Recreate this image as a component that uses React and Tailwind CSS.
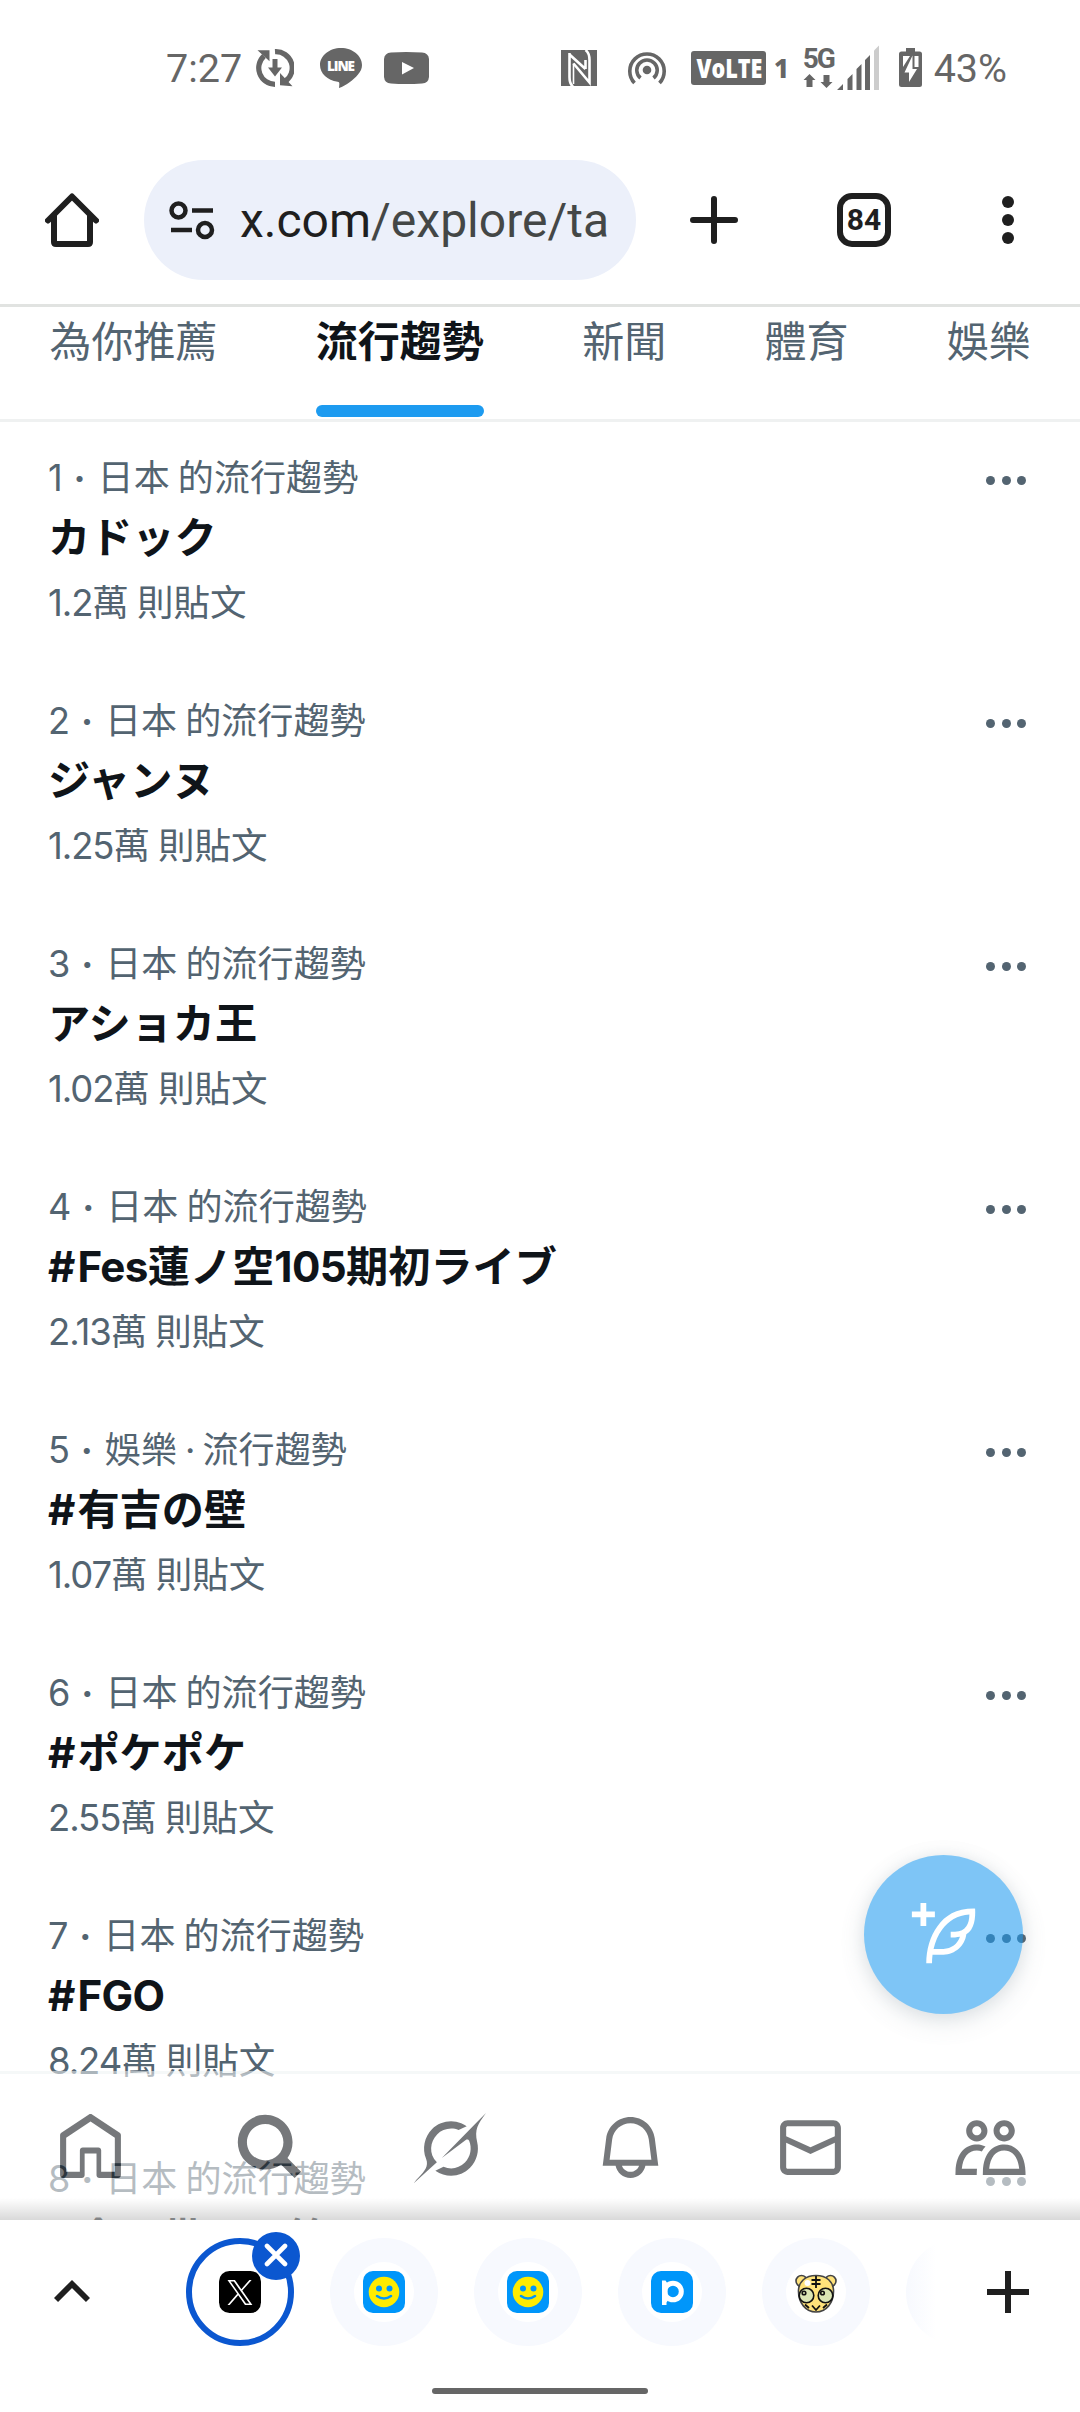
"use client";

const tabs = ["為你推薦", "流行趨勢", "新聞", "體育", "娛樂"];

const trends = [
  { rank: "1", meta: "日本 的流行趨勢", title: "カドック", count: "1.2" },
  { rank: "2", meta: "日本 的流行趨勢", title: "ジャンヌ", count: "1.25" },
  { rank: "3", meta: "日本 的流行趨勢", title: "アショカ王", count: "1.02" },
  { rank: "4", meta: "日本 的流行趨勢", title: "#Fes蓮ノ空105期初ライブ", count: "2.13" },
  { rank: "5", meta: "娛樂 · 流行趨勢", title: "#有吉の壁", count: "1.07" },
  { rank: "6", meta: "日本 的流行趨勢", title: "#ポケポケ", count: "2.55" },
  { rank: "7", meta: "日本 的流行趨勢", title: "#FGO", count: "8.24" },
  { rank: "8", meta: "日本 的流行趨勢", title: "#今の帯との第", count: "1.1" },
];

const navIcons = [
  {
    name: "home",
    d: "M21.591 7.146L12.52 1.157c-.316-.21-.724-.21-1.04 0l-9.071 5.99c-.26.173-.409.456-.409.757v13.183c0 .502.418.913.929.913H9.14c.51 0 .929-.41.929-.913v-7.075h3.909v7.075c0 .502.417.913.928.913h6.165c.511 0 .929-.41.929-.913V7.904c0-.301-.158-.584-.408-.758zM20 20l-4.5.01.011-7.097c0-.502-.418-.913-.928-.913H9.44c-.511 0-.929.41-.929.913L8.5 20H4V8.773l8.011-5.342L20 8.764z",
  },
  {
    name: "search",
    d: "M10.25 4.25c-3.314 0-6 2.686-6 6s2.686 6 6 6c1.657 0 3.155-.67 4.243-1.757 1.087-1.088 1.757-2.586 1.757-4.243 0-3.314-2.686-6-6-6zm-9 6c0-4.971 4.029-9 9-9s9 4.029 9 9c0 1.943-.617 3.744-1.664 5.215l4.475 4.474-2.122 2.122-4.474-4.475c-1.471 1.047-3.272 1.664-5.215 1.664-4.971 0-9-4.029-9-9z",
  },
  {
    name: "grok",
    viewBox: "0 0 33 32",
    d: "M12.745 20.54l10.97-8.19c.539-.4 1.307-.244 1.564.38 1.349 3.288.746 7.241-1.938 9.955-2.683 2.714-6.417 3.31-9.83 1.954l-3.728 1.745c5.347 3.697 11.84 2.782 15.898-1.324 3.219-3.255 4.216-7.692 3.284-11.693l.008.009c-1.351-5.878.332-8.227 3.782-13.031L33 0l-4.54 4.59v-.014L12.743 20.544m-2.263 1.987c-3.837-3.707-3.175-9.446.1-12.755 2.42-2.449 6.388-3.448 9.852-1.979l3.72-1.737c-.67-.49-1.53-1.017-2.515-1.387-4.455-1.854-9.789-.931-13.41 2.728-3.483 3.523-4.579 8.94-2.697 13.561 1.405 3.454-.899 5.898-3.22 8.364C1.49 30.2.666 31.074 0 32l10.478-9.466",
  },
  {
    name: "notifications",
    d: "M19.993 9.042C19.48 5.017 16.054 2 11.996 2s-7.49 3.021-7.999 7.051L2.866 18H7.1c.463 2.282 2.481 4 4.9 4s4.437-1.718 4.9-4h4.236l-1.143-8.958zM12 20c-1.306 0-2.417-.835-2.829-2h5.658c-.412 1.165-1.523 2-2.829 2zm-6.866-4l.847-6.698C6.364 6.272 8.941 4 11.996 4s5.627 2.268 6.013 5.295L18.864 16H5.134z",
  },
  {
    name: "messages",
    d: "M1.998 5.5c0-1.381 1.119-2.5 2.5-2.5h15c1.381 0 2.5 1.119 2.5 2.5v13c0 1.381-1.119 2.5-2.5 2.5h-15c-1.381 0-2.5-1.119-2.5-2.5v-13zm2.5-.5c-.276 0-.5.224-.5.5v2.764l8 3.638 8-3.636V5.5c0-.276-.224-.5-.5-.5h-15zm15.5 5.463l-8 3.636-8-3.638V18.5c0 .276.224.5.5.5h15c.276 0 .5-.224.5-.5v-8.037z",
  },
  {
    name: "communities",
    d: "M7.501 19.917L7.471 21H.472l.029-1.027c.184-6.618 3.736-8.977 7-8.977.963 0 1.95.212 2.87.672-.444.478-.851 1.03-1.212 1.656-.507-.204-1.054-.329-1.658-.329-2.767 0-4.57 2.223-4.938 6.004H7.56c-.023.302-.05.599-.059.917zm15.998.056L23.528 21H9.472l.029-1.027c.184-6.618 3.736-8.977 7-8.977s6.816 2.358 7 8.977zM21.437 19c-.367-3.781-2.17-6.004-4.938-6.004s-4.57 2.223-4.938 6.004h9.875zm-4.938-9c-.799 0-1.527-.279-2.116-.73-.836-.64-1.384-1.638-1.384-2.77 0-1.93 1.567-3.5 3.5-3.5s3.5 1.57 3.5 3.5c0 1.132-.548 2.13-1.384 2.77-.589.451-1.317.73-2.116.73zm-1.5-3.5c0 .827.673 1.5 1.5 1.5s1.5-.673 1.5-1.5-.673-1.5-1.5-1.5-1.5.673-1.5 1.5zM7.5 3C9.433 3 11 4.57 11 6.5S9.433 10 7.5 10 4 8.43 4 6.5 5.567 3 7.5 3zm0 2C6.673 5 6 5.673 6 6.5S6.673 8 7.5 8 9 7.327 9 6.5 8.327 5 7.5 5z",
  },
];

function StatusBar() {
  return (
    <div className="h-[134px] shrink-0 flex items-start text-[#666] pl-[166px] pr-[73px] font-[Roboto,sans-serif]">
      <span className="mt-[46px] text-[39.5px] leading-[46px] w-[90px]">7:27</span>
      <svg className="mt-[49px] w-[38px] h-[38px]" viewBox="0 0 38 38" fill="none" stroke="currentColor">
        <path d="M19 2.7A16.3 16.3 0 0 1 29 32.5M19 35.3A16.3 16.3 0 0 1 8 7" strokeWidth="5.2" />
        <path d="M1.5 1.2h12v11zM36.5 37.3l-12.5-1V24zM12 18.5h14L19 27.5z" fill="currentColor" stroke="none" />
        <path d="M19 10v10" strokeWidth="5" />
      </svg>
      <svg className="mt-[48px] ml-[26px] w-[42px] h-[40px]" viewBox="0 0 42 40">
        <path
          d="M21 0C9.4 0 0 7.6 0 17c0 8.4 7.5 15.4 17.6 16.7 1.5.3 2 1 1.7 3l-.3 3.3c7.5-2.7 14.5-8.2 18.8-13.3C40.7 23.5 42 20.4 42 17 42 7.6 32.6 0 21 0z"
          fill="currentColor"
        />
        <text x="21" y="23" textAnchor="middle" fill="#fff" fontSize="13.5" fontWeight="800" fontFamily="Open Sans, sans-serif" textLength="28">
          LINE
        </text>
      </svg>
      <svg className="mt-[52px] ml-[22px] w-[45px] h-[32px]" viewBox="0 0 45 32">
        <path d="M7 .5Q22 -.5 38 .5Q44.5 1 45 7V25Q44.5 31 38 31.5Q22 32.5 7 31.5Q.5 31 0 25V7Q.5 1 7 .5z" fill="currentColor" />
        <path d="M18 10l12 6-12 6.5z" fill="#fff" />
      </svg>
      <div className="grow" />
      <svg className="mt-[50px] w-[36px] h-[36px]" viewBox="0 0 36 36">
        <path d="M0 0h36v36H0z" fill="currentColor" />
        <path d="M8.5 3v24q0 7 3.5 9.5M8.5 4.5L24.5 19M24.5 10v9" fill="none" stroke="#fff" strokeWidth="2.6" />
        <path d="M12.5 13.5L28.5 32.5V10q0-7-4-10" fill="none" stroke="#fff" strokeWidth="2.6" />
        <path d="M12.5 13.5V34" fill="none" stroke="#fff" strokeWidth="1.6" />
      </svg>
      <svg className="mt-[50px] ml-[31px] w-[38px] h-[36px]" viewBox="0 0 38 36" fill="none" stroke="currentColor" strokeWidth="3.6">
        <circle cx="19" cy="20" r="4.3" fill="currentColor" stroke="none" />
        <path d="M12.5 28a10.2 10.2 0 1 1 13 0M6.5 33a17.2 17.2 0 1 1 25 0" />
      </svg>
      <span className="mt-[51px] ml-[25px] w-[75px] h-[34px] rounded-[3px] bg-[#666] text-white text-[26px] font-extrabold leading-[34px] text-center font-['Open_Sans',sans-serif]">
        <span className="inline-block w-[76px] -ml-[1px] scale-x-[.83] origin-center">VoLTE</span>
      </span>
      <span className="mt-[54px] ml-[8px] w-[12px] text-[27px] font-extrabold leading-[28px] font-['Noto_Sans',sans-serif]">1</span>
      <span className="mt-[46px] ml-[17px] w-[32px] flex flex-col">
        <span className="text-[28px] font-bold leading-[26px] tracking-[-2px]">5G</span>
        <svg className="mt-[2px] w-[30px] h-[14px]" viewBox="0 0 30 14" fill="currentColor">
          <path d="M6.5 0l6 6H9.5v7h-6V6H.5zM23.5 14l-6-6h3V1h6v7h3z" />
        </svg>
      </span>
      <svg className="mt-[45px] ml-[2px] w-[44px] h-[45px]" viewBox="0 0 44 45" fill="currentColor">
        <path d="M0 45l6-6v6zM10.5 34l5-5v16h-5zM19.5 24l5-5v26h-5zM28 15l5-5v35h-5z" />
        <path d="M37 5.5l5-5V45h-5z" fill="#ccc" />
      </svg>
      <svg className="mt-[48px] ml-[18px] w-[23px] h-[39px]" viewBox="0 0 23 39">
        <path d="M7 0h9v3.5h4.5Q23 3.5 23 6v30.5Q23 39 20.5 39h-18Q0 39 0 36.5V6q0-2.5 2.5-2.5H7z" fill="currentColor" />
        <path d="M4 8h7L4 19zM15.5 8h4v11h-4z" fill="#fff" />
        <path d="M13.5 7.5v13.5h4.5L10 34V24.5H5.5z" fill="#fff" />
      </svg>
      <span className="mt-[46px] ml-[12px] text-[39.5px] leading-[46px]">43%</span>
    </div>
  );
}

function Toolbar() {
  return (
    <div className="h-[173px] shrink-0 flex items-center pb-[1px] border-b-[3px] border-[#e1e3e1] text-[#1f1f1f] pt-[3px] font-[Roboto,sans-serif]">
      <svg className="ml-[45px] w-[54px] h-[56px]" viewBox="0 0 54 56" fill="none" stroke="currentColor" strokeWidth="6" strokeLinecap="round" strokeLinejoin="round">
        <path d="M3 28.5L27 4.5l24 24M9 24v26q0 2 2 2h32q2 0 2-2V24" />
      </svg>
      <div className="ml-[45px] w-[492px] h-[120px] rounded-full bg-[#ecf0fa] flex items-center">
        <svg className="ml-[25px] w-[46px] h-[40px]" viewBox="0 0 46 40" fill="none" stroke="currentColor" strokeWidth="4.5">
          <circle cx="9.5" cy="10.5" r="7" />
          <circle cx="36" cy="30" r="7" />
          <path d="M23 10.5h21M2 30h21" />
        </svg>
        <span className="ml-[25px] mt-[1px] text-[48px] leading-[60px] text-[#444746] whitespace-nowrap">
          <span className="text-[#1f1f1f]">x.com</span>/explore/ta
        </span>
      </div>
      <svg className="ml-[54px] w-[48px] h-[48px]" viewBox="0 0 48 48" stroke="currentColor" strokeWidth="6" strokeLinecap="round">
        <path d="M24 3v42M3 24h42" />
      </svg>
      <div className="ml-[99px] w-[54px] h-[54px] rounded-[15px] border-[6px] border-[#1f1f1f] flex items-center justify-center text-[30px] font-bold leading-none">
        84
      </div>
      <div className="ml-[111px] flex flex-col gap-[6px]">
        <i className="size-[12px] rounded-full bg-[#1f1f1f]" />
        <i className="size-[12px] rounded-full bg-[#1f1f1f]" />
        <i className="size-[12px] rounded-full bg-[#1f1f1f]" />
      </div>
    </div>
  );
}

function Tabs() {
  return (
    <div className="h-[115px] shrink-0 flex gap-[98.3px] pl-[49.5px] border-b-[3px] border-[#eff1f1] text-[42px] text-[#536471] whitespace-nowrap">
      {tabs.map((tab) => (
        <div
          key={tab}
          className={
            tab === "流行趨勢"
              ? "h-full flex flex-col justify-between font-bold text-[#0f1419]"
              : "h-full"
          }
        >
          <div className="mt-[4px] h-[56px] leading-[56px]">{tab}</div>
          {tab === "流行趨勢" && <div className="h-[12px] mb-[2px] rounded-full bg-[#1d9bf0]" />}
        </div>
      ))}
    </div>
  );
}

// Latin runs sit tighter than the CJK glyphs around them
function Mixed({ text, bold }) {
  return text.split(/(#|[A-Za-z0-9.·]+)/).map((part, i) => {
    if (i % 2 === 0) return part;
    if (part === "#") {
      return (
        <span key={i} className="font-[Inter,sans-serif] mr-[2px]">
          #
        </span>
      );
    }
    return (
      <span
        key={i}
        className={
          bold
            ? "font-[Inter,sans-serif] tracking-[-0.015em]"
            : "font-[Inter,sans-serif] tracking-[-0.03em]"
        }
      >
        {part}
      </span>
    );
  });
}

function TrendRow({ trend }) {
  return (
    <div className="h-[243px] shrink-0 pt-[31px] pl-[48px] pr-[54px] flex justify-between whitespace-nowrap">
      <div>
        <div className="h-[45px] leading-[45px] text-[36.1px] text-[#536471]">
          <Mixed text={trend.rank} />
          <span className="inline-block w-[36px] text-center font-bold font-[Inter,sans-serif]">·</span>
          <Mixed text={trend.meta} />
        </div>
        <div className="mt-[9px] h-[56px] leading-[56px] text-[42.2px] font-bold text-[#0f1419] font-['Noto_Sans_CJK_JP',sans-serif]">
          <Mixed text={trend.title} bold />
        </div>
        <div className="mt-[15px] h-[45px] leading-[45px] text-[36.5px] text-[#536471]">
          <Mixed text={trend.count} />萬 則貼文
        </div>
      </div>
      <div className="mt-[23px] flex gap-[6.5px]">
        <i className="size-[9px] rounded-full bg-[#536471]" />
        <i className="size-[9px] rounded-full bg-[#536471]" />
        <i className="size-[9px] rounded-full bg-[#536471]" />
      </div>
    </div>
  );
}

function ComposeButton() {
  return (
    <button className="absolute right-[57px] top-[1433px] size-[159px] rounded-full bg-[#1d9bf0] opacity-[.57] flex items-center justify-center text-white shadow-[0_8px_22px_rgba(101,119,134,0.3),0_0_16px_rgba(101,119,134,0.2)]">
      <svg className="size-[69px]" viewBox="0 0 24 24" fill="currentColor">
        <path d="M23 3c-6.62-.1-10.38 2.421-13.05 6.03C7.29 12.61 6 17.331 6 22h2c0-1.007.07-2.012.19-3H12c4.1 0 7.48-3.082 7.94-7.054C22.79 10.147 23.17 6.359 23 3zm-7 8h-1.5v2H16c.63-.016 1.2-.08 1.72-.188C16.95 15.24 14.68 17 12 17H8.55c.57-2.512 1.57-4.851 3-6.78 2.16-2.912 5.29-4.911 9.45-5.187C20.95 8.079 19.9 11 16 11zM4 9V6H1V4h3V1h2v3h3v2H6v3H4z" />
      </svg>
    </button>
  );
}

function BottomNav() {
  return (
    <div className="absolute inset-x-0 bottom-0 h-[149px] border-t-[3px] border-[#eff3f4] bg-white opacity-[.57] grid grid-cols-6 justify-items-center text-[#0f1419]">
      {navIcons.map((icon) => (
        <svg
          key={icon.name}
          className={icon.name === "grok" ? "mt-[39px] w-[72px] h-[70px]" : "mt-[37px] size-[73px]"}
          viewBox={icon.viewBox || "0 0 24 24"}
          fill="currentColor"
        >
          <path d={icon.d} />
        </svg>
      ))}
    </div>
  );
}

function XIcon() {
  return (
    <svg className="w-[42px] h-[42px]" viewBox="0 0 42 42">
      <rect width="42" height="42" rx="10.5" fill="#000" />
      <path
        transform="translate(8.5 9) scale(1.04)"
        d="M14.258 10.152L23.176 0h-2.113l-7.747 8.813L7.133 0H0l9.352 13.328L0 23.973h2.113l8.176-9.309 6.531 9.309h7.133zM2.875 1.559h3.246l14.942 20.965h-3.246z"
        fill="#fff"
      />
    </svg>
  );
}

function SmileIcon() {
  return (
    <svg className="w-[42px] h-[42px]" viewBox="0 0 42 42">
      <rect width="42" height="42" rx="10" fill="#0096fa" />
      <circle cx="21" cy="21" r="15.3" fill="#ffeb00" />
      <circle cx="16" cy="17.5" r="3" fill="#0096fa" />
      <circle cx="26.5" cy="17.5" r="3" fill="#0096fa" />
      <path d="M14 25q7 5 14 0" fill="none" stroke="#0096fa" strokeWidth="2.6" strokeLinecap="round" />
    </svg>
  );
}

function PixivIcon() {
  return (
    <svg className="w-[42px] h-[42px]" viewBox="0 0 42 42">
      <rect width="42" height="42" rx="10" fill="#0096fa" />
      <circle cx="22" cy="20.5" r="8.3" fill="none" stroke="#fff" strokeWidth="5" />
      <path d="M11 9.5h3.5l2 3v17.5l-1 1.5v2.5H11z" fill="#fff" />
    </svg>
  );
}

function TigerIcon() {
  return (
    <svg className="w-[42px] h-[42px]" viewBox="0 0 42 42" stroke="#444" strokeWidth="1.6">
      <circle cx="6.5" cy="10" r="5.5" fill="#ffe27a" />
      <circle cx="35.5" cy="10" r="5.5" fill="#ffe27a" />
      <path d="M21 4.5C10 4.5 4 11 3.5 19 3 32 11 41 21 41S39 32 38.5 19C38 11 32 4.5 21 4.5z" fill="#ffe27a" />
      <circle cx="11.5" cy="24.5" r="7.3" fill="#dbe6b4" stroke="#111" />
      <circle cx="30.5" cy="24.5" r="7.3" fill="#dbe6b4" stroke="#111" />
      <circle cx="9" cy="22" r="1.8" fill="none" stroke="#111" />
      <circle cx="27.5" cy="22" r="1.8" fill="none" stroke="#111" />
      <path d="M21 5v12M16.5 9h9M16.5 13h9M17 34.5l4 4.5 4-4.5M10 33.5l4 3.5M32 33.5l-4 3.5" fill="none" stroke="#111" strokeWidth="1.8" />
      <circle cx="12.5" cy="12" r="3" fill="#fff" stroke="none" />
    </svg>
  );
}

function TabCircle({ children }) {
  return (
    <div className="size-[108px] shrink-0 rounded-full bg-[#f7f9fe] flex items-center justify-center">
      <div className="size-[60px] rounded-full bg-white flex items-center justify-center">{children}</div>
    </div>
  );
}

function TabStrip() {
  return (
    <div className="relative h-[192px] shrink-0 bg-white text-[#1f1f1f]">
      <div className="h-[144px] flex items-center">
        <svg className="ml-[54px] mt-[-2px] w-[36px] h-[24px]" viewBox="0 0 36 24" fill="none" stroke="currentColor" strokeWidth="5.8">
          <path d="M2 21L18 5l16 16" />
        </svg>
        <div className="ml-[96px] w-[750px] h-full flex items-center gap-[36px] overflow-hidden">
          <div className="relative size-[108px] shrink-0 rounded-full border-[6px] border-[#0b57d0] flex items-center justify-center">
            <XIcon />
            <div className="absolute -top-[12px] -right-[12px] size-[48px] rounded-full bg-[#0b57d0] flex items-center justify-center">
              <svg className="size-[24px] -mt-[2px]" viewBox="0 0 24 24" stroke="#fff" strokeWidth="4.6" strokeLinecap="round">
                <path d="M3 3l18 18M21 3L3 21" />
              </svg>
            </div>
          </div>
          <TabCircle>
            <SmileIcon />
          </TabCircle>
          <TabCircle>
            <SmileIcon />
          </TabCircle>
          <TabCircle>
            <PixivIcon />
          </TabCircle>
          <TabCircle>
            <TigerIcon />
          </TabCircle>
          <div className="w-[30px] h-[108px] shrink-0 overflow-hidden">
            <div className="size-[108px] rounded-full bg-linear-to-r from-[#f7f9fe] to-white to-[28%]" />
          </div>
        </div>
        <svg className="ml-[51px] w-[42px] h-[42px]" viewBox="0 0 42 42" stroke="currentColor" strokeWidth="6">
          <path d="M21 0v42M0 21h42" />
        </svg>
      </div>
      <div className="mx-auto mt-[24px] w-[216px] h-[6px] rounded-full bg-[#666]" />
    </div>
  );
}

export default function App() {
  return (
    <div className="w-[1080px] h-[2412px] bg-white overflow-hidden flex flex-col font-['Noto_Sans_CJK_TC',sans-serif]">
      <StatusBar />
      <Toolbar />
      <Tabs />
      <div className="relative h-[1798px] shrink-0 overflow-hidden">
        {trends.map((trend) => (
          <TrendRow key={trend.rank} trend={trend} />
        ))}
        <ComposeButton />
        <BottomNav />
        <div className="absolute inset-x-0 bottom-0 h-[22px] bg-linear-to-b from-transparent to-black/15" />
      </div>
      <TabStrip />
    </div>
  );
}
